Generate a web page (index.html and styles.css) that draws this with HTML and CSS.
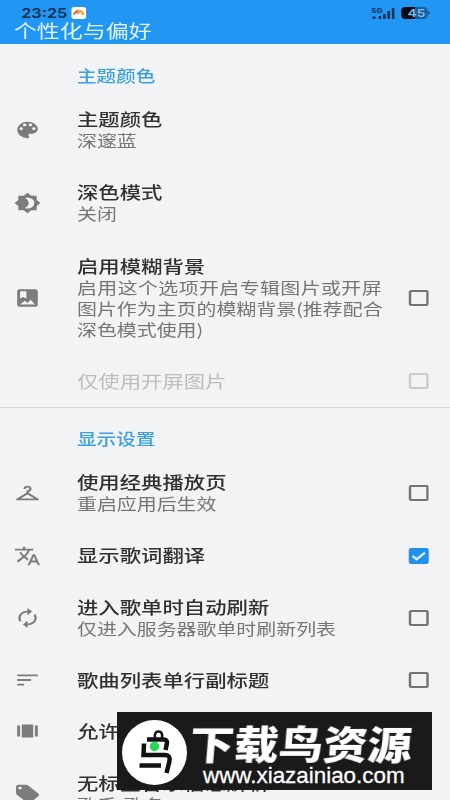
FILE: index.html
```html
<!DOCTYPE html>
<html lang="zh-CN">
<head>
<meta charset="utf-8">
<title>个性化与偏好</title>
<link rel="stylesheet" href="styles.css">
</head>
<body>
<div class="screen">
<main class="app">
  <header class="bar">
    <div class="status">
      <span class="time">23:25</span>
      <svg class="note" viewBox="0 0 12 12"><rect width="12" height="12" rx="2.5" fill="#fffaf0"/><path d="M2 7.500L4.500 4 6 6.500" fill="none" stroke="#d9634f" stroke-width="1.800"/><path d="M4.500 4Q9 3 9.500 8" fill="none" stroke="#f5a623" stroke-width="2"/></svg>
      <span class="grow"></span>
      <svg class="signal" viewBox="0 0 19 13"><path d="M1 9.500h2.500V12H1zM6 9h2v3H6zM9.500 7h2v5h-2zM13 4h2v8h-2zM16.500 1h2v11h-2z" fill="#0b3154"/><text x="0" y="6" class="net">5G</text></svg>
      <svg class="battery" viewBox="0 0 23 12"><rect width="21" height="12" rx="3.500" fill="#17609f"/><path d="M3.500 0H11v12H3.500A3.500 3.500 0 0 1 0 8.500v-5A3.500 3.500 0 0 1 3.500 0z" fill="#020a12"/><path d="M21 4q2 0 2 2t-2 2z" fill="#17609f"/><text x="5" y="10" class="level">45</text></svg>
    </div>
    <h1>个性化与偏好</h1>
  </header>

  <section>
    <h2>主题颜色</h2>
    <div class="row two">
      <svg class="icon" viewBox="0 0 24 24"><path d="M12 3a9 9 0 0 0 0 18c.83 0 1.500-.67 1.500-1.500 0-.39-.15-.74-.39-1.010-.23-.26-.38-.61-.38-.99 0-.83.67-1.500 1.500-1.500H16c2.760 0 5-2.240 5-5 0-4.420-4.030-8-9-8zm-5.500 9a1.500 1.500 0 1 1 0-3 1.500 1.500 0 0 1 0 3zm3-4a1.500 1.500 0 1 1 0-3 1.500 1.500 0 0 1 0 3zm5 0a1.500 1.500 0 1 1 0-3 1.500 1.500 0 0 1 0 3zm3 4a1.500 1.500 0 1 1 0-3 1.500 1.500 0 0 1 0 3z"/></svg>
      <div class="text"><h3>主题颜色</h3><p>深邃蓝</p></div>
    </div>
    <div class="row two">
      <svg class="icon" viewBox="0 0 24 24"><path d="M20 15.310L23.310 12 20 8.690V4h-4.690L12 .69 8.690 4H4v4.690L.69 12 4 15.310V20h4.690L12 23.310 15.310 20H20v-4.690zM12 18c-.89 0-1.740-.2-2.500-.55C11.560 16.500 13 14.420 13 12s-1.440-4.500-3.500-5.450C10.260 6.200 11.110 6 12 6a6 6 0 0 1 0 12z"/></svg>
      <div class="text"><h3>深色模式</h3><p>关闭</p></div>
    </div>
    <div class="row tall">
      <svg class="icon" viewBox="0 0 24 24"><path fill-rule="evenodd" d="M5 2.500h14a2 2 0 0 1 2 2v15a2 2 0 0 1-2 2H5a2 2 0 0 1-2-2v-15a2 2 0 0 1 2-2zm.5 2v8L8.200 11l2.800 1.500v-8zM5.500 19h13l-3.700-5-2.800 3.500-2.200-2.500z"/></svg>
      <div class="text"><h3>启用模糊背景</h3><p><span class="wide">启用这个选项开启专辑图片或开屏</span><br>图片作为主页的模糊背景(推荐配合<br>深色模式使用)</p></div>
      <i class="box"></i>
    </div>
    <div class="row one off">
      <span class="icon"></span>
      <div class="text"><h3>仅使用开屏图片</h3></div>
      <i class="box"></i>
    </div>
  </section>

  <section class="next">
    <h2>显示设置</h2>
    <div class="row two">
      <svg class="icon" viewBox="0 0 24 24"><path d="M21.600 18.200 13 11.750v-.91a3.500 3.500 0 1 0-4.500-3.340h2a1.500 1.500 0 1 1 1.500 1.500c-.55 0-1 .45-1 1v1.750L2.400 18.200A1 1 0 0 0 3 20h18a1 1 0 0 0 .6-1.800zM6 18l6-4.500 6 4.500H6z"/></svg>
      <div class="text"><h3>使用经典播放页</h3><p>重启应用后生效</p></div>
      <i class="box"></i>
    </div>
    <div class="row one">
      <svg class="icon" viewBox="0 0 24 24"><path d="M12.870 15.070l-2.540-2.510.03-.03A17.520 17.520 0 0 0 14.070 6H17V4h-7V2H8v2H1v1.990h11.170C11.500 7.920 10.440 9.750 9 11.350 8.070 10.320 7.300 9.190 6.690 8h-2c.73 1.630 1.730 3.170 2.980 4.560l-5.090 5.020L4 19l5-5 3.110 3.110.76-2.040zM18.500 10h-2L12 22h2l1.120-3h4.750L21 22h2l-4.500-12zm-2.620 7l1.620-4.330L19.120 17h-3.240z"/></svg>
      <div class="text"><h3>显示歌词翻译</h3></div>
      <svg class="box checked" viewBox="0 0 16 16"><path d="M3 8l3.300 3.300L13 4.600"/></svg>
    </div>
    <div class="row two">
      <svg class="icon" viewBox="0 0 24 24"><path d="M12 6v3l4-4-4-4v3a8 8 0 0 0-6.760 12.260l1.460-1.460A5.900 5.900 0 0 1 6 12c0-3.310 2.690-6 6-6zm6.760 1.740L17.300 9.200c.44.84.7 1.790.7 2.800 0 3.310-2.690 6-6 6v-3l-4 4 4 4v-3a8 8 0 0 0 6.760-12.260z"/></svg>
      <div class="text"><h3>进入歌单时自动刷新</h3><p>仅进入服务器歌单时刷新列表</p></div>
      <i class="box"></i>
    </div>
    <div class="row one">
      <svg class="icon" viewBox="0 0 24 24"><path d="M3 18h6v-2H3v2zM3 6v2h18V6H3zm0 7h12v-2H3v2z"/></svg>
      <div class="text"><h3>歌曲列表单行副标题</h3></div>
      <i class="box"></i>
    </div>
    <div class="row one">
      <svg class="icon" viewBox="0 0 24 24"><path d="M7 19h10V5H7v14zM3 18h2.500V6H3v12zM18.500 6v12H21V6h-2.500z"/></svg>
      <div class="text"><h3>允许</h3></div>
    </div>
    <div class="row two">
      <svg class="icon" viewBox="0 0 24 24"><path d="M21.410 11.580l-9-9A2 2 0 0 0 11 2H4a2 2 0 0 0-2 2v7c0 .55.220 1.050.590 1.420l9 9a2 2 0 0 0 2.820 0l7-7a2 2 0 0 0 0-2.840zM5.500 7a1.500 1.500 0 1 1 0-3 1.500 1.500 0 0 1 0 3z"/></svg>
      <div class="text"><h3>无标签音乐信息解析</h3><p>歌手-歌名</p></div>
    </div>
  </section>
</main>

<aside class="mark">
  <svg class="logo" viewBox="0 0 65 65"><circle cx="32.500" cy="32.500" r="32.500" fill="#fff"/><g fill="none" stroke="#111" stroke-width="4.500"><path d="M25 19.500H41Q45.500 19.500 45 23L43.500 30"/><path d="M22 23.500 21.500 35H43Q48.500 35 47.500 41L44.500 53"/><path d="M17.500 45.500H39"/><path d="M33 18Q32 11.500 36.500 11.500Q41 11.500 40 18" stroke-width="2.500"/></g><circle cx="32.500" cy="26.500" r="4.700" fill="#25d657"/></svg>
  <div class="words"><strong>下载鸟资源</strong><span>www.xiazainiao.com</span></div>
</aside>
</div>
</body>
</html>
```

FILE: styles.css
```css
* { box-sizing: border-box; margin: 0; padding: 0; }
body { background: #f2f3f5; overflow: hidden; }
.screen { position: relative; width: 450px; height: 800px; overflow: hidden; }
.app {
  width: 360px;
  transform: scaleX(1.25);
  transform-origin: 0 0;
  font-family: "Noto Sans CJK SC", sans-serif;
  color: #303133;
}
.bar { height: 44px; background: #2196f3; padding: 6px 16px 0 11px; }
.status { display: flex; align-items: center; height: 14px; padding-left: 6px; }
.time { font: 600 13px/14px Inter, sans-serif; color: #072c4d; width: 36px; }
.note { width: 12px; height: 12px; margin-left: 4px; }
.grow { flex: 1; }
.signal { width: 19px; height: 13px; }
.net { font: 700 6.5px Inter, sans-serif; fill: #0b3154; }
.battery { width: 23px; height: 12px; margin-left: 5px; }
.level { font: 600 11px Inter, sans-serif; fill: #7dbdf0; }
h1 { font-size: 18.4px; line-height: 20px; font-weight: 400; color: #e2f3ff; }
h2 { height: 49.5px; padding: 14px 0 0 61.6px; font-size: 15.7px; line-height: 36px; font-weight: 500; color: #3b9fe8; }
.next { border-top: 1px solid #d5d6d8; }
.next h2 { height: 49px; padding-top: 13px; }
.row { display: flex; align-items: center; padding: 0 17px 0 11px; }
.two { height: 73.3px; }
.tall { height: 115.5px; }
.one { height: 51.2px; }
.icon { width: 22px; height: 22px; fill: #7b7c7d; margin-right: 28.6px; flex: none; }
.text { flex: 1; white-space: nowrap; padding-bottom: 2px; }
h3 { font-size: 17.1px; line-height: 23px; font-weight: 500; }
p { font-size: 15.95px; line-height: 21px; color: #747577; }
.wide { letter-spacing: .33px; }
.box { width: 16px; height: 16px; border: 2px solid #737476; border-radius: 2px; flex: none; }
.checked { border: 0; background: #2490ed; fill: none; stroke: #d9f4ff; stroke-width: 2; }
.off h3 { color: #bcbdbf; font-weight: 400; }
.off .box { border-color: #c9cacc; }
.mark {
  position: absolute; left: 117px; top: 712px; width: 315px; height: 78px;
  background: #1a1a1a; color: #fff; display: flex; padding: 8px 0 0 5px;
}
.logo { width: 65px; height: 65px; flex: none; }
.words { padding-left: 3px; }
strong {
  display: block; height: 45px; white-space: nowrap;
  font: 900 38px/45px "Noto Sans CJK SC", sans-serif;
  transform: scaleX(1.17) skewX(-4deg); transform-origin: 0 50%;
}
.words span { display: block; padding-left: 13px; font: 22.4px/22px "Liberation Sans", sans-serif; -webkit-text-stroke: .3px #fff; }
```
